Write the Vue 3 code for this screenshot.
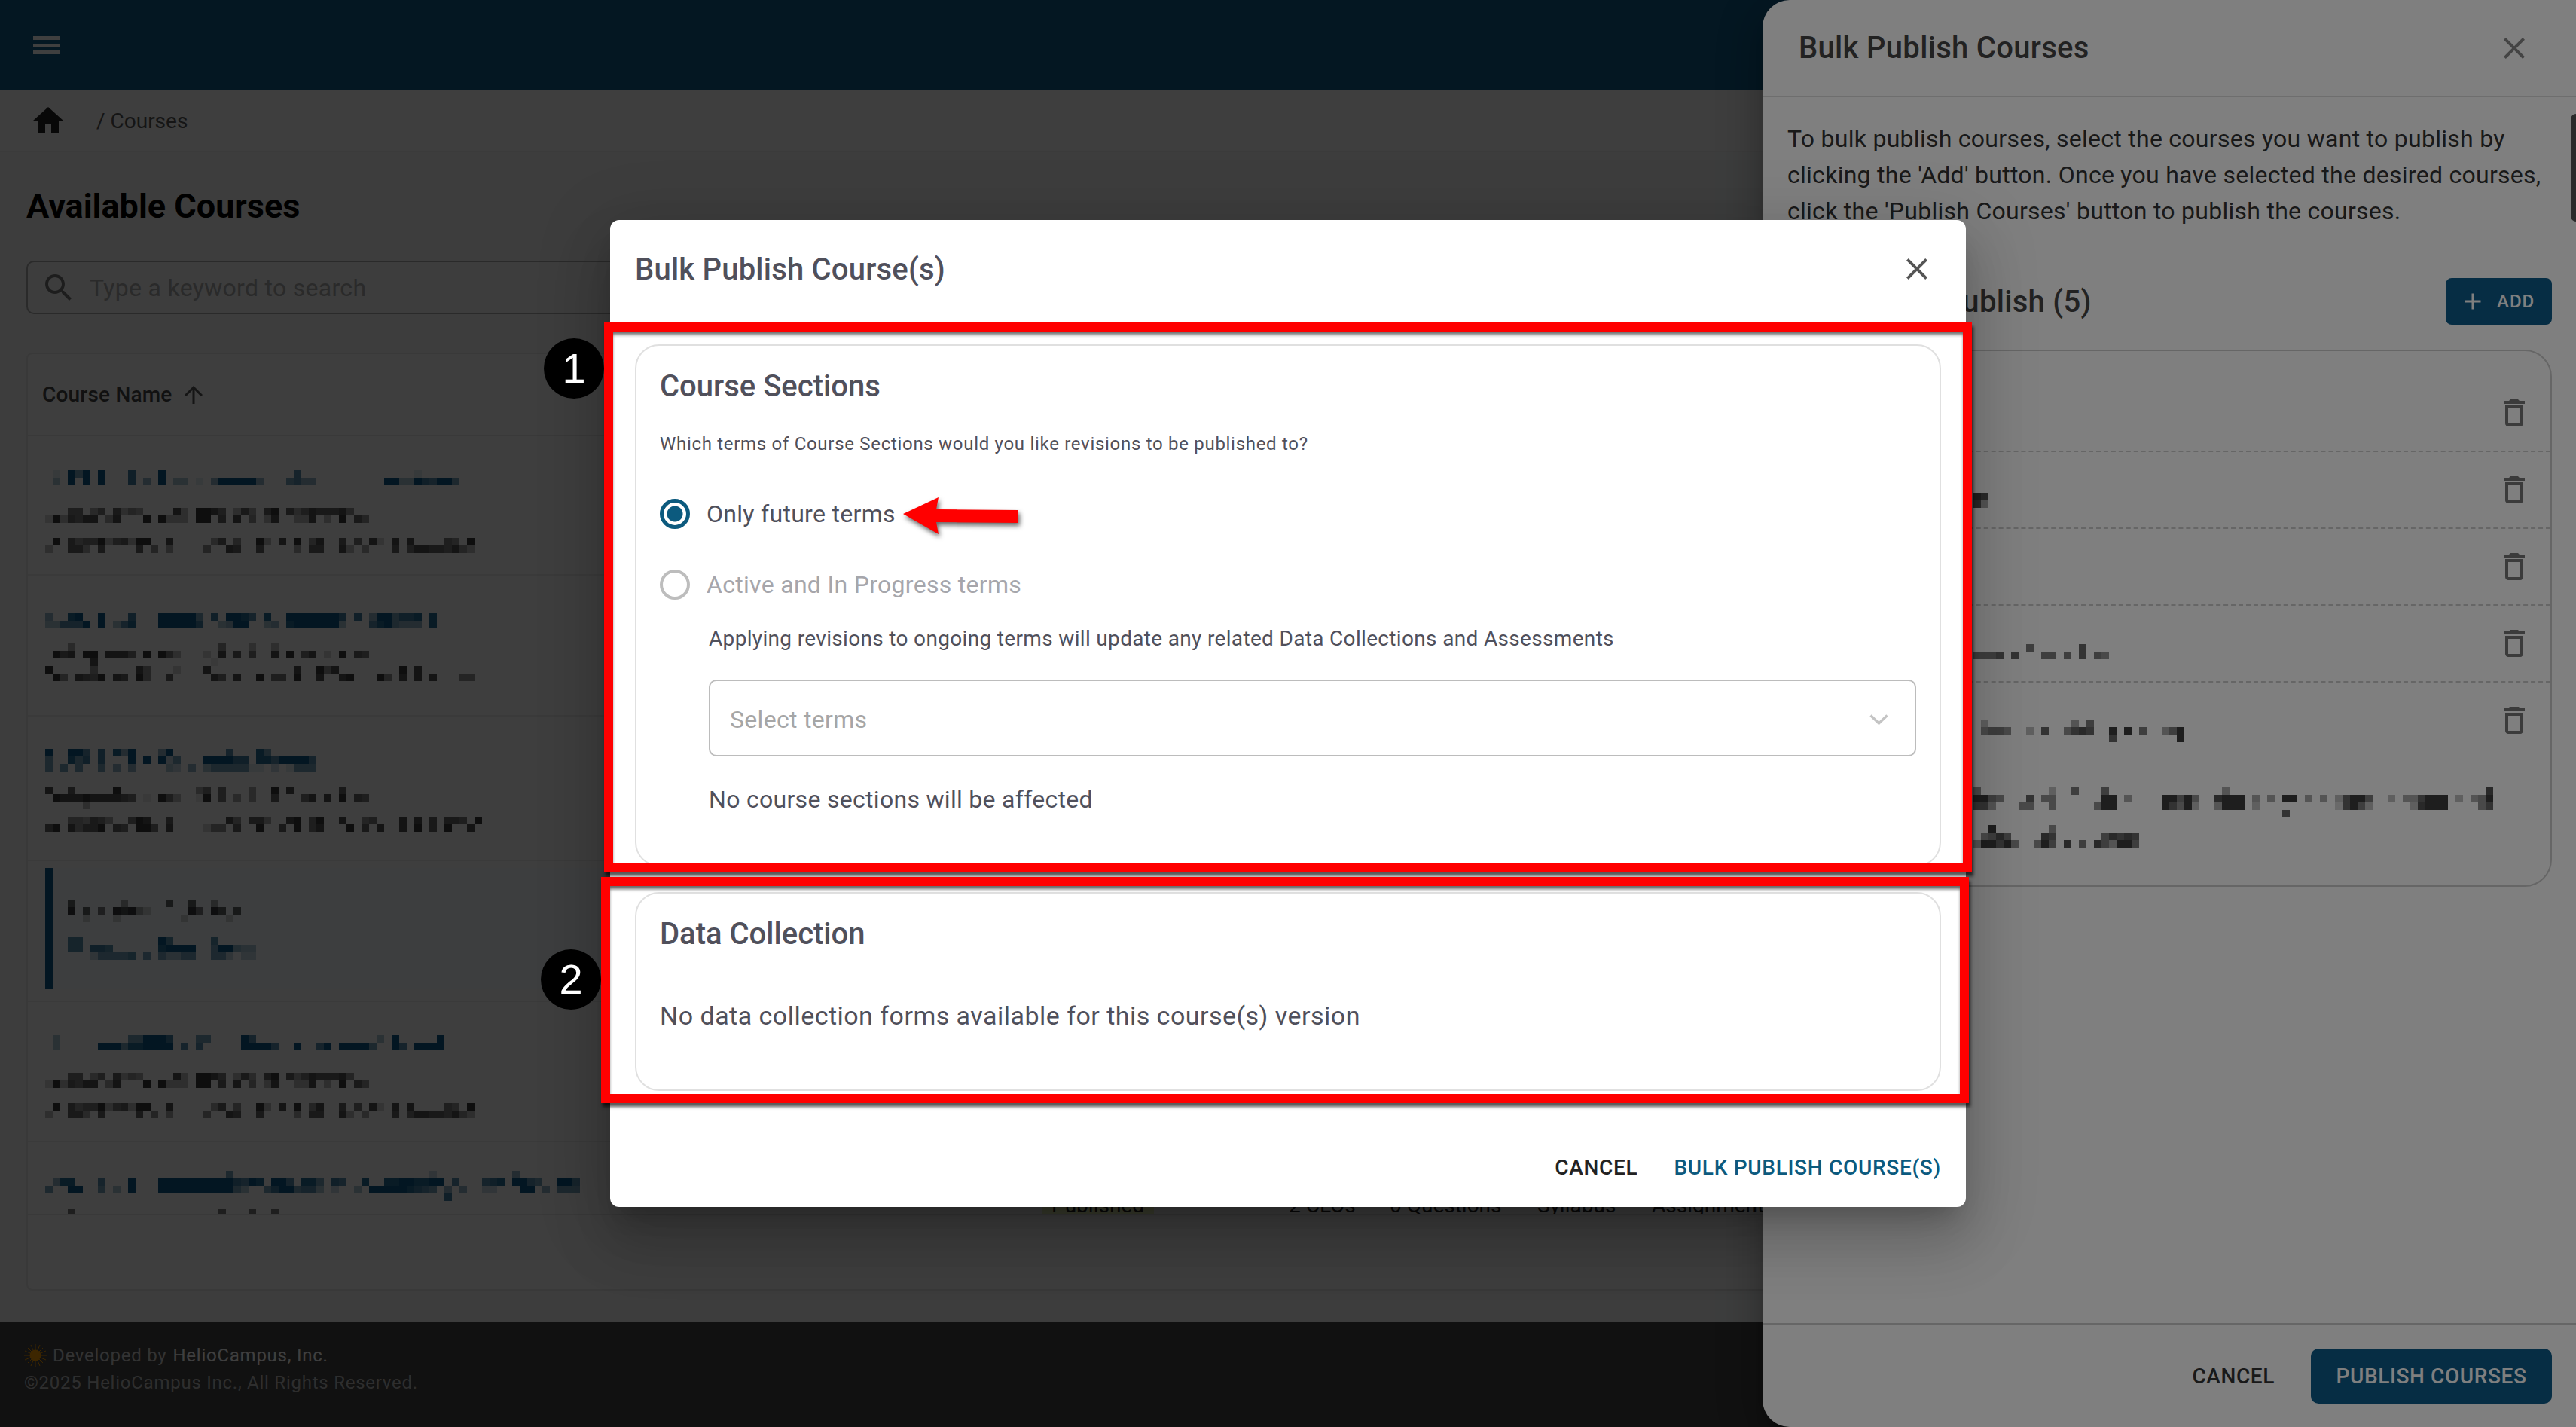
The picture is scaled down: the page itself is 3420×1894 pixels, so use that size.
<script setup>
const toCells = (lines, dark) => {
  const rects = []
  let w = 0
  lines.forEach((line, y) => {
    const s = line.s.replace(/ /g, '')
    w = Math.max(w, s.length)
    ;[...s].forEach((ch, x) => {
      const n = Number(ch)
      if (!n) return
      const blue = line.t === 'b'
      rects.push({ k: x + '-' + y, x: x * 10, y: y * 10, fill: blue ? '#0c5a88' : '#000', op: blue ? n / 9 : n * dark })
    })
  })
  return { w: w * 10, h: lines.length * 10, rects }
}
const blank = { t: 'k', s: '0' }
const b = (s) => ({ t: 'b', s })
const k = (s) => ({ t: 'k', s })

const bodyA = [
  k('000 66 0 46 0 7354 0000 83 0 9986 0 374 0 79 0 746877785'),
  k('2937688 0 48 000 9 0 9333 0 99 0 7 0 8 0 5 0 38 00 338 0 3 0 9 0 75')
]
const bodyB = [
  k('090 75669 3 6 7 3 9 9 00 8 00000 47 0 5 00 93 0 8 0 9 0 58 00 7 0 6 0 82 0 8 0 8 0 000 6 5 0 9'),
  k('300 774 0 7 0000 7 0 5 0 4 0000 5 00 87 00 7 0000 4 0 77 00 83 0 4 000 7 0 68 8 7 7 6 8 5 3')
]

const courseRows = [
  { id: 1, h: 185, pad: 45, cells: toCells([
    b('01095909000700090000000000000000060000000000000001'),
    b('0309090900070409 033010 4 99999 4 000 5644 000000000 99339 7 6 9 9 5'),
    blank, blank, blank, ...bodyA, blank, blank, ...bodyB
  ], 0.085) },
  { id: 2, h: 187, pad: 50, cells: toCells([
    b('4 00 89 00 9 000 7 000 99999 5 0 7 0 9986 0 8 00 9999999 7 0 7 0 4 99 5 7 7 8 0 8'),
    b('3 3 6 6 6 9 0 9 0 3 6 8 000 99999 7 00 3 4 99 00 3 4 0 8 999999 3 000 6 8 9 5 4 4 4 0 8'),
    blank, blank,
    k('000 4 0000000000000000000 5 000 3 00 3'),
    k('0 9 7 8 0 9 9 0 8 8 8 6 0 9 0 9 6 3 000 2 0 8 0 7 0 6 00 8 0 9 0 6 8 0 2 0 9 0 7 6'),
    k('000000 8 000000000000000 1'),
    k('9 00000 5 00000 85 000 2 000 8 00000000000 8 00 9 5 8 00000000 9 0 8'),
    k('0 9 5 0 8 7 6 9 0 8 7 0 9 5 00 7 00000 8 6 0 8 00 9 0 6 6 0 9 00 8 00 8 9 000 9 5 0 8 0 8 0 8 000 5 5')
  ], 0.085) },
  { id: 3, h: 192, pad: 43, cells: toCells([
    b('9 00 9 9 6 0 7 0 8 4 9 000 4 9 0000000 6 000 8 5'),
    b('5 00 8 5 7 0 7 000 9 0 9 0 9 2 5 000 9999 7 7 0 8 8 6 9999 6'),
    b('5 0 5 0 5 00 5 0 4 0 4 0000 3 2 0 4 0 3 5 5 5 5 5 1 1 0 2 0 1 5 5 5'),
    blank, blank,
    k('8 00 7 00000 9 0000000000 4 6 0 6 000 4 00 9 0 8 000000 7'),
    k('0 9 8 8 8 9 8 8 8 8 7 6 0 1 0 9 6 3 00 1 9 0 6 0 4 0 4 00 7 000 6 8 0 8 0 9 0 7 6'),
    k('00000 3'),
    blank,
    k('000 5 5 4 7 6 4 00 6 9 8 00 7 0000000 8 5 0 7 7 4 00 8 9 0 6 9 00 8 00 5 6 000 8 0 8 0 7 0 7 7 6 0 9'),
    k('7 9 0 8 5 7 7 9 0 7 6 0 9 9 6 0 8 0000 2 5 5 0 7 00 9 00 7 0 9 0 6 8 000 9 0 7 0 8 00 8 0 9 0 7 0 9 00 8')
  ], 0.085) },
  { id: 4, h: 187, pad: 9, active: true, cells: toCells([
    k('7 000000 4 00000 7 00 7 00 4'),
    k('9 0 7 0 6 0 9 8 9 4 2 00000 9 6 0 9 7 0 7'),
    k('00 2 000 2 00000000 2 00000 2'),
    blank, blank,
    b('6 6 0000000000 9 6 00000 6'),
    b('6 6 0 7 7 6 000000 8 9 9 9 9 00 5 9 9 4 3 3'),
    b('000 2 5 5 5 5 6 0 5 0 5 3 3 5 5 00 5 5 2 0 2 2')
  ], 0.085) },
  { id: 5, h: 186, pad: 44, cells: toCells([
    b('0 3 000000000 5 5 9 9 9 7 000 5 5 0000 9 6 0000000000000000 3 0 9 00000 9'),
    b('0 3 00000 9 9 9 5 8 8 9 9 9 9 0 6 0 6 00000 9 9 9 9 6 00 9 00 6 9 0 9 9 9 9 5 00 9 6 0 9 9 9 9'),
    blank, blank, blank, ...bodyA, blank, blank, ...bodyB
  ], 0.085) },
  { id: 6, h: 187, pad: 38, last: true, cells: toCells([
    b('000000000000000000000000 5 00000000000000000000000000 2 0000000000 4'),
    b('0 4 8 8 000 6 000 9 000 9999999999 7 6 9 8 0 9 9 6 0 8 8 5 0 7 6 00 8 00 8 8 9 9 8 8 9 9 0 6 000 6 7 8 0 9 9 6 5 00 9 9 6'),
    b('5 00 9 9 00 5 0 3 0 9 000 9999999999 5 3 00 5 7 9 9 5 6 6 3 0 2 00 3 0 9 9 9 9 9 8 7 6 5 0 4 0 4 00 2 2 000 9 9 0 4 0 5 5 5'),
    b('00000000000000000000000000000000000000000000000000000 7'),
    blank,
    k('000 6 0000000000000000000 6 000 6 00 6')
  ], 0.085) }
]

const publishRows = [
  { id: 1, h: 134, iconTop: 58, cellTop: 0, cells: null },
  { id: 2, h: 102, iconTop: 26, cellTop: 54, cells: toCells([
    k('9 8'),
    k('8 4')
  ], 0.085) },
  { id: 3, h: 102, iconTop: 26, cellTop: 0, cells: null },
  { id: 4, h: 102, iconTop: 26, cellTop: 51, cells: toCells([
    k('0000000 6 000000 7'),
    k('6 6 6 7 0 7 000 6 6 0 6 0 7 0 6 5')
  ], 0.085) },
  { id: 5, h: 270, iconTop: 26, cellTop: 49, last: true, cells: toCells([
    k('0 3 00000000000 4 0 6'),
    k('0 5 6 6 5 00 3 0 7 00 5 7 8 7 00 9 0 9 0 6 00 4 6 9'),
    k('000000000000000000 7 00000000 9'),
    blank, blank, blank, blank, blank, blank,
    k('5 000000000 3 00 6 000 6 000000000000000 4 0000000000000000000000000000000000 8'),
    k('9 9 6 5 000 7 0 5 5 000000 9 9 0 4 0000 9 9 6 9 5 00 8 9 9 9 0 4 0 4 0 9 9 0 4 0 4 0 3 7 9 9 6 00 3 0 4 4 7 9 9 9 0 3 0 4 5 9'),
    k('7 7 4 000 5 5 0 0 5 00000 5 9 9 000000 9 7 5 9 3 00 4 9 9 9 0 3 0000000000 2 7 9 6 3 00000 3 8 9 9 9 0000 5 7'),
    k('00000000000000000000000000000000000000000 7'),
    blank,
    k('00 9 0000000 5'),
    k('0 5 6 8 6 0000 8 7 000000 6 8 7 8 7'),
    k('4 9 9 7 9 5 00 5 9 6 0 8 0 6 0 8 6 4 9 9 6')
  ], 0.085) }
]
</script>

<template>
  <div class="screen">
    <div class="page">
      <header class="topbar">
        <svg class="menu" viewBox="0 0 36 24" width="36" height="24" aria-hidden="true">
          <rect y="0" width="36" height="5" fill="#fff" />
          <rect y="10" width="36" height="4" fill="#fff" />
          <rect y="19" width="36" height="5" fill="#fff" />
        </svg>
      </header>
      <nav class="crumbs">
        <svg class="home" viewBox="0 0 24 24" width="48" height="48" aria-hidden="true">
          <path d="M10 20v-6h4v6h5v-8h3L12 3 2 12h3v8z" fill="#222" />
        </svg>
        <span class="crumb-text">/ Courses</span>
      </nav>
      <main class="main">
        <h1 class="page-title">Available Courses</h1>
        <div class="search">
          <svg viewBox="0 0 24 24" width="48" height="48" aria-hidden="true">
            <path d="M15.5 14h-.79l-.28-.27C15.41 12.59 16 11.11 16 9.5 16 5.91 13.09 3 9.5 3S3 5.91 3 9.5 5.91 16 9.5 16c1.61 0 3.09-.59 4.23-1.57l.27.28v.79l5 4.99L20.49 19l-4.99-5zm-6 0C7.01 14 5 11.99 5 9.5S7.01 5 9.5 5 14 7.01 14 9.5 11.99 14 9.5 14z" fill="#777" />
          </svg>
          <span class="placeholder">Type a keyword to search</span>
        </div>
        <section class="table-card">
          <div class="table-head">
            <span>Course Name</span>
            <svg viewBox="0 0 24 24" width="36" height="36" aria-hidden="true">
              <path d="M4 12l1.41 1.41L11 7.83V20h2V7.83l5.58 5.59L20 12l-8-8-8 8z" fill="#555" />
            </svg>
          </div>
          <div class="table-body">
            <div
              v-for="row in courseRows"
              :key="row.id"
              class="course-row"
              :class="{ 'is-active': row.active, 'is-last': row.last }"
              :style="{ height: row.h + 'px', paddingTop: row.pad + 'px' }"
            >
              <div v-if="row.active" class="active-box">
                <svg class="blur" :width="row.cells.w" :height="row.cells.h" shape-rendering="crispEdges" aria-hidden="true">
                  <rect v-for="c in row.cells.rects" :key="c.k" :x="c.x" :y="c.y" width="10" height="10" :fill="c.fill" :opacity="c.op" />
                </svg>
              </div>
              <svg v-else class="blur" :width="row.cells.w" :height="row.cells.h" shape-rendering="crispEdges" aria-hidden="true">
                <rect v-for="c in row.cells.rects" :key="c.k" :x="c.x" :y="c.y" width="10" height="10" :fill="c.fill" :opacity="c.op" />
              </svg>
              <div v-if="row.last" class="row-meta">
                <span class="chip">Published</span>
                <span>2 CLOs</span>
                <span>0 Questions</span>
                <span>Syllabus</span>
                <span>Assignments</span>
              </div>
            </div>
          </div>
        </section>
      </main>
      <footer class="footer">
        <div class="foot-line">
          <svg viewBox="0 0 30 30" width="30" height="30" aria-hidden="true">
            <g stroke="#f59a00" stroke-width="1">
              <line x1="15" y1="0" x2="15" y2="30" />
              <line x1="0" y1="15" x2="30" y2="15" />
              <line x1="5" y1="5" x2="25" y2="25" />
              <line x1="25" y1="5" x2="5" y2="25" />
              <line x1="9" y1="1" x2="21" y2="29" />
              <line x1="21" y1="1" x2="9" y2="29" />
              <line x1="1" y1="9" x2="29" y2="21" />
              <line x1="29" y1="9" x2="1" y2="21" />
            </g>
            <circle cx="15" cy="15" r="7.5" fill="#f59a00" />
          </svg>
          <span class="foot-dim">Developed by</span>
          <span class="foot-bright">HelioCampus, Inc.</span>
        </div>
        <div class="foot-copy">©2025 HelioCampus Inc., All Rights Reserved.</div>
      </footer>
    </div>

    <div class="scrim"></div>

    <aside class="drawer">
      <div class="drawer-head">
        <span class="drawer-title">Bulk Publish Courses</span>
        <svg viewBox="0 0 24 24" width="48" height="48" aria-hidden="true">
          <path d="M19 6.41 17.59 5 12 10.59 6.41 5 5 6.41 10.59 12 5 17.59 6.41 19 12 13.41 17.59 19 19 17.59 13.41 12z" fill="#888" />
        </svg>
      </div>
      <div class="drawer-body">
        <p class="drawer-desc">To bulk publish courses, select the courses you want to publish by clicking the 'Add' button. Once you have selected the desired courses, click the 'Publish Courses' button to publish the courses.</p>
        <div class="drawer-sub">
          <h2>Courses to Publish (5)</h2>
          <span class="add-btn">
            <svg viewBox="0 0 24 24" width="36" height="36" aria-hidden="true">
              <path d="M19 13h-6v6h-2v-6H5v-2h6V5h2v6h6v2z" fill="#fff" />
            </svg>
            ADD
          </span>
        </div>
        <div class="publish-list">
          <div
            v-for="row in publishRows"
            :key="row.id"
            class="publish-row"
            :class="{ 'is-last': row.last }"
            :style="{ height: row.h + 'px' }"
          >
            <svg
              v-if="row.cells"
              class="blur"
              :width="row.cells.w"
              :height="row.cells.h"
              :style="{ marginTop: row.cellTop + 'px' }"
              shape-rendering="crispEdges"
              aria-hidden="true"
            >
              <rect v-for="c in row.cells.rects" :key="c.k" :x="c.x" :y="c.y" width="10" height="10" :fill="c.fill" :opacity="c.op" />
            </svg>
            <svg class="trash" viewBox="0 0 24 24" width="48" height="48" :style="{ marginTop: row.iconTop + 'px' }" aria-hidden="true">
              <path d="M6 19c0 1.1.9 2 2 2h8c1.1 0 2-.9 2-2V7H6v12zM8 9h8v10H8V9zm7.5-5-1-1h-5l-1 1H5v2h14V4z" fill="#777" />
            </svg>
          </div>
        </div>
      </div>
      <div class="drawer-foot">
        <span class="drawer-cancel">CANCEL</span>
        <span class="publish-btn">PUBLISH COURSES</span>
      </div>
      <div class="scroll-thumb"></div>
    </aside>

    <div class="scrim"></div>

    <div class="dialog">
      <div class="dialog-head">
        <span class="dialog-title">Bulk Publish Course(s)</span>
        <svg viewBox="0 0 24 24" width="48" height="48" aria-hidden="true">
          <path d="M19 6.41 17.59 5 12 10.59 6.41 5 5 6.41 10.59 12 5 17.59 6.41 19 12 13.41 17.59 19 19 17.59 13.41 12z" fill="#555" />
        </svg>
      </div>
      <div class="dialog-body">
        <section class="panel panel-sections">
          <h3 class="panel-title">Course Sections</h3>
          <p class="question">Which terms of Course Sections would you like revisions to be published to?</p>
          <label class="radio-row first">
            <span class="radio checked"></span>
            <span>Only future terms</span>
          </label>
          <label class="radio-row second disabled">
            <span class="radio"></span>
            <span>Active and In Progress terms</span>
          </label>
          <div class="indent">
            <p class="applying">Applying revisions to ongoing terms will update any related Data Collections and Assessments</p>
            <div class="select">
              <span>Select terms</span>
              <svg viewBox="0 0 25 14" width="25" height="14" aria-hidden="true">
                <polyline points="1.5,1.5 12.5,12 23.5,1.5" fill="none" stroke="#c4c4c4" stroke-width="3.4" />
              </svg>
            </div>
            <p class="affected">No course sections will be affected</p>
          </div>
        </section>
        <section class="panel panel-data">
          <h3 class="panel-title">Data Collection</h3>
          <p class="no-data">No data collection forms available for this course(s) version</p>
        </section>
      </div>
      <div class="dialog-actions">
        <span class="act-cancel">CANCEL</span>
        <span class="act-primary">BULK PUBLISH COURSE(S)</span>
      </div>
    </div>

    <div class="mark mark-one"></div>
    <div class="mark mark-two"></div>
    <div class="badge badge-one">1</div>
    <div class="badge badge-two">2</div>
    <svg class="arrow" viewBox="0 0 160 56" width="160" height="56" aria-hidden="true">
      <polygon points="1,23 48,1 45,17 154,18 154,35 45,34 48,50" fill="#f00" />
    </svg>
  </div>
</template>

<style>
html, body { margin: 0; background: #f4f5f6; }
</style>

<style scoped>
.screen {
  position: relative;
  width: 3420px;
  height: 1894px;
  overflow: hidden;
  font-family: Roboto, "Liberation Sans", sans-serif;
  color: #333;
}
.page { display: flex; flex-direction: column; height: 100%; background: #f5f6f6; }
.topbar { height: 120px; flex: none; background: #105c88; display: flex; align-items: center; padding-left: 44px; box-sizing: border-box; }
.menu { display: block; }
.crumbs { height: 82px; flex: none; display: flex; align-items: center; box-sizing: border-box; padding: 0 0 0 40px; border-bottom: 2px solid #eee; background: #f9f9f9; }
.crumb-text { margin-left: 40px; font-size: 28px; color: #555; }
.main { flex: 1; padding: 44px 0 0 35px; min-height: 0; }
.page-title { margin: 0; font-size: 45px; line-height: 56px; font-weight: 700; color: #000; }
.search {
  margin-top: 44px; height: 71px; box-sizing: border-box; width: 3200px;
  display: flex; align-items: center; padding-left: 17px;
  border: 2px solid #aaa; border-radius: 10px;
}
.placeholder { margin-left: 17px; font-size: 32px; letter-spacing: .3px; color: #aaa; }
.table-card { margin-top: 51px; height: 1245px; width: 3350px; box-sizing: border-box; border: 2px solid #e4e4e4; border-radius: 8px; background: #fafafa; }
.table-head { height: 109px; box-sizing: border-box; display: flex; align-items: center; padding-left: 19px; font-size: 28px; font-weight: 500; letter-spacing: .2px; color: #444; gap: 10px; border-bottom: 2px solid #e4e4e4; }
.table-body { height: 1032px; overflow: hidden; border-bottom: 2px solid #e4e4e4; }
.course-row { position: relative; box-sizing: border-box; padding-left: 23px; border-bottom: 2px solid #e8e8e8; }
.blur { display: block; flex: none; }
.active-box { box-sizing: border-box; height: 161px; border-left: 10px solid #0c5a88; padding: 42px 0 0 20px; background: #f6fbfd; }
.row-meta { position: absolute; left: 0; top: 66px; width: 2400px; box-sizing: border-box; padding-left: 1346px; display: grid; grid-template-columns: 328px 134px 196px 152px 1fr; font-size: 28px; line-height: 36px; color: #222; }
.chip { width: 149px; text-align: center; background: #eef4b8; }
.footer { height: 140px; flex: none; box-sizing: border-box; background: #444; padding: 27px 0 0 32px; font-size: 24px; line-height: 36px; letter-spacing: .75px; }
.foot-line { display: flex; align-items: center; gap: 8px; }
.foot-dim { color: #ccc; }
.foot-bright { color: #fff; }
.foot-copy { color: #bbb; }

.scrim { position: absolute; inset: 0; background: rgba(0, 0, 0, .5); }

.drawer {
  position: absolute; top: 0; right: 0; bottom: 0; width: 1080px;
  display: flex; flex-direction: column;
  background: #fff; border-radius: 36px 0 0 36px;
  box-shadow: 0 16px 20px -10px rgba(0,0,0,.2), 0 32px 48px 4px rgba(0,0,0,.14), 0 12px 60px 10px rgba(0,0,0,.12);
}
.drawer-head { height: 129px; flex: none; box-sizing: border-box; display: flex; align-items: center; justify-content: space-between; padding: 0 58px 0 48px; border-bottom: 2px solid #ddd; }
.drawer-title { font-size: 40px; font-weight: 500; letter-spacing: .3px; color: #444; }
.drawer-body { flex: 1; padding: 31px 32px 0 33px; min-height: 0; }
.drawer-desc { margin: 0; font-size: 32px; line-height: 48px; letter-spacing: .27px; color: #333; }
.drawer-sub { margin-top: 65px; height: 62px; display: flex; align-items: center; justify-content: space-between; }
.drawer-sub h2 { margin: 0; font-size: 40px; font-weight: 500; letter-spacing: .3px; color: #444; }
.add-btn { height: 62px; width: 141px; box-sizing: border-box; display: flex; align-items: center; gap: 14px; padding-left: 18px; background: #0c5a88; color: #fff; border-radius: 8px; font-size: 24px; font-weight: 500; letter-spacing: 1px; }
.publish-list { margin-top: 33px; height: 713px; box-sizing: border-box; border: 2px solid #ccc; border-radius: 36px; }
.publish-row { display: flex; justify-content: space-between; box-sizing: border-box; padding: 0 24px 0 245px; border-bottom: 2px dashed #ccc; }
.publish-row.is-last { border-bottom: 0; }
.trash { display: block; flex: none; margin-left: auto; }
.drawer-foot { height: 138px; flex: none; box-sizing: border-box; border-top: 2px solid #ccc; display: flex; align-items: center; justify-content: flex-end; padding-right: 32px; gap: 48px; }
.drawer-cancel { font-size: 28px; font-weight: 500; letter-spacing: .6px; color: #333; }
.publish-btn { width: 320px; height: 73px; box-sizing: border-box; display: flex; align-items: center; justify-content: center; background: #0c5a88; color: #fff; border-radius: 10px; font-size: 28px; font-weight: 500; letter-spacing: .6px; }
.scroll-thumb { position: absolute; right: 0; top: 151px; width: 7px; height: 143px; background: #555; border-radius: 7px 0 0 7px; }

.dialog {
  position: absolute; left: 810px; top: 292px; width: 1800px; height: 1310px;
  display: flex; flex-direction: column;
  background: #fff; border-radius: 12px;
  box-shadow: 0 22px 30px -14px rgba(0,0,0,.2), 0 48px 76px 6px rgba(0,0,0,.14), 0 18px 92px 16px rgba(0,0,0,.12);
}
.dialog-head { height: 130px; flex: none; box-sizing: border-box; display: flex; align-items: center; justify-content: space-between; padding: 0 41px 0 33px; }
.dialog-title { font-size: 40px; font-weight: 500; letter-spacing: .2px; color: #50505b; }
.dialog-body { padding: 35px 33px 0; display: flex; flex-direction: column; gap: 34px; }
.panel { box-sizing: border-box; border: 2px solid #e0e0e0; border-radius: 32px; padding: 26px 31px 0; color: #50505b; }
.panel-sections { height: 693px; }
.panel-data { height: 264px; }
.panel-title { margin: 0; font-size: 40px; line-height: 56px; font-weight: 500; }
.question { margin: 30px 0 0; font-size: 24px; line-height: 36px; letter-spacing: .7px; }
.radio-row { display: flex; align-items: center; height: 60px; font-size: 32px; letter-spacing: .3px; gap: 22px; }
.radio-row.first { margin-top: 45px; }
.radio-row.second { margin-top: 34px; }
.radio-row.disabled { color: #a6a6ab; }
.radio { width: 40px; height: 40px; box-sizing: border-box; border-radius: 50%; border: 4px solid #bdbdbd; flex: none; }
.radio.checked { border: 5px solid #0c5a7e; background: radial-gradient(circle, #0c5a7e 0 10px, transparent 11px); }
.indent { margin-left: 65px; }
.applying { margin: 22px 0 0; font-size: 28px; line-height: 40px; letter-spacing: .33px; }
.select { margin-top: 34px; height: 102px; box-sizing: border-box; display: flex; align-items: center; justify-content: space-between; padding: 3px 35px 0 26px; border: 2px solid #bcbcbc; border-radius: 10px; font-size: 32px; letter-spacing: .3px; color: #a6a6a6; }
.affected { margin: 35px 0 0; font-size: 32px; line-height: 44px; letter-spacing: .3px; }
.no-data { margin: 55px 0 0; font-size: 34px; line-height: 50px; letter-spacing: .47px; }
.dialog-actions { flex: 1; display: flex; align-items: center; justify-content: flex-end; gap: 48px; padding: 48px 33px 0 0; font-size: 28px; font-weight: 500; letter-spacing: .7px; }
.act-cancel { color: #222; }
.act-primary { color: #0c5a7e; }

.mark { position: absolute; box-sizing: border-box; border: 12px solid #f00; box-shadow: 2px 5px 4px rgba(0,0,0,.65), inset 0 5px 4px -1px rgba(0,0,0,.6); }
.mark-one { left: 802px; top: 428px; width: 1816px; height: 730px; }
.mark-two { left: 798px; top: 1164px; width: 1816px; height: 300px; }
.badge { position: absolute; width: 80px; height: 80px; border-radius: 50%; background: #000; color: #fff; font-family: "Liberation Sans", sans-serif; font-size: 56px; line-height: 80px; text-align: center; }
.badge-one { left: 722px; top: 449px; }
.badge-two { left: 718px; top: 1260px; }
.arrow { position: absolute; left: 1198px; top: 659px; overflow: visible; filter: drop-shadow(2px 4px 3px rgba(0,0,0,.6)); }
</style>
